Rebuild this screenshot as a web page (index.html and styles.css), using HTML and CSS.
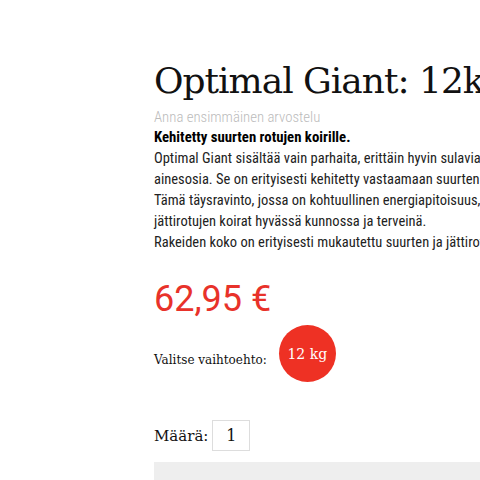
FILE: index.html
```html
<!DOCTYPE html>
<html lang="fi">
<head>
<meta charset="utf-8">
<link rel="stylesheet" href="styles.css">
</head>
<body>
<div class="page">
  <div class="product">
    <h1 class="title">Optimal Giant: 12kg</h1>
    <div class="rating">Anna ensimmäinen arvostelu</div>
    <div class="desc">
      <p class="lead">Kehitetty suurten rotujen koirille.</p>
      <p>Optimal Giant sisältää vain parhaita, erittäin hyvin sulavia</p>
      <p>ainesosia. Se on erityisesti kehitetty vastaamaan suurten ja jättirotujen</p>
      <p>Tämä täysravinto, jossa on kohtuullinen energiapitoisuus, pitää</p>
      <p>jättirotujen koirat hyvässä kunnossa ja terveinä.</p>
      <p>Rakeiden koko on erityisesti mukautettu suurten ja jättirotujen</p>
    </div>
    <div class="price">62,95 €</div>
    <div class="variant">
      <span class="variant-label">Valitse vaihtoehto:</span>
      <span class="variant-option">12 kg</span>
    </div>
    <div class="qty">
      <span class="qty-label">Määrä:</span>
      <span class="qty-input">1</span>
    </div>
    <div class="buy-bar"></div>
  </div>
</div>
</body>
</html>
```
FILE: styles.css
```css
html, body {
  margin: 0;
  padding: 0;
  overflow: hidden;
  background: #fff;
}
.page {
  width: 480px;
  height: 480px;
  overflow: hidden;
}
.product {
  width: 700px;
  padding-left: 154px;
  padding-top: 57px;
  box-sizing: content-box;
  white-space: nowrap;
}
.title {
  margin: 0;
  font-family: "DejaVu Serif", serif;
  font-weight: normal;
  font-size: 36px;
  line-height: 48px;
  color: #111;
  letter-spacing: -1px;
}
.rating {
  font-family: "Roboto Condensed", "DejaVu Sans Condensed", Roboto, sans-serif;
  font-weight: 300;
  font-size: 14.8px;
  line-height: 20px;
  color: #bbb;
  margin-top: 2px;
}
.desc {
  font-family: "Roboto Condensed", "DejaVu Sans Condensed", Roboto, sans-serif;
  font-size: 14.5px;
  line-height: 21px;
  color: #222;
}
.desc p {
  margin: 0;
}
.desc .lead {
  font-weight: bold;
  color: #000;
  font-size: 14.8px;
}
.price {
  font-family: Roboto, sans-serif;
  font-size: 36px;
  line-height: 42px;
  color: #e8322a;
  margin-top: 25px;
}
.variant {
  display: flex;
  align-items: center;
  gap: 12px;
  margin-top: 5px;
}
.variant-label {
  font-family: "DejaVu Serif", serif;
  font-size: 12px;
  color: #111;
  padding-top: 12px;
}
.variant-option {
  width: 57px;
  height: 57px;
  border-radius: 50%;
  background: #ee3124;
  color: #fff;
  display: flex;
  align-items: center;
  justify-content: center;
  font-family: "DejaVu Serif", serif;
  font-size: 14px;
}
.qty {
  display: flex;
  align-items: center;
  gap: 4px;
  margin-top: 38px;
}
.qty-label {
  font-family: "DejaVu Serif", serif;
  font-size: 15px;
  color: #111;
}
.qty-input {
  width: 36px;
  height: 29px;
  border: 1px solid #ddd;
  display: flex;
  align-items: center;
  justify-content: center;
  font-family: "DejaVu Serif", serif;
  font-size: 16px;
  color: #111;
}
.buy-bar {
  margin-top: 11px;
  height: 40px;
  width: 500px;
  background: #eee;
}
```
